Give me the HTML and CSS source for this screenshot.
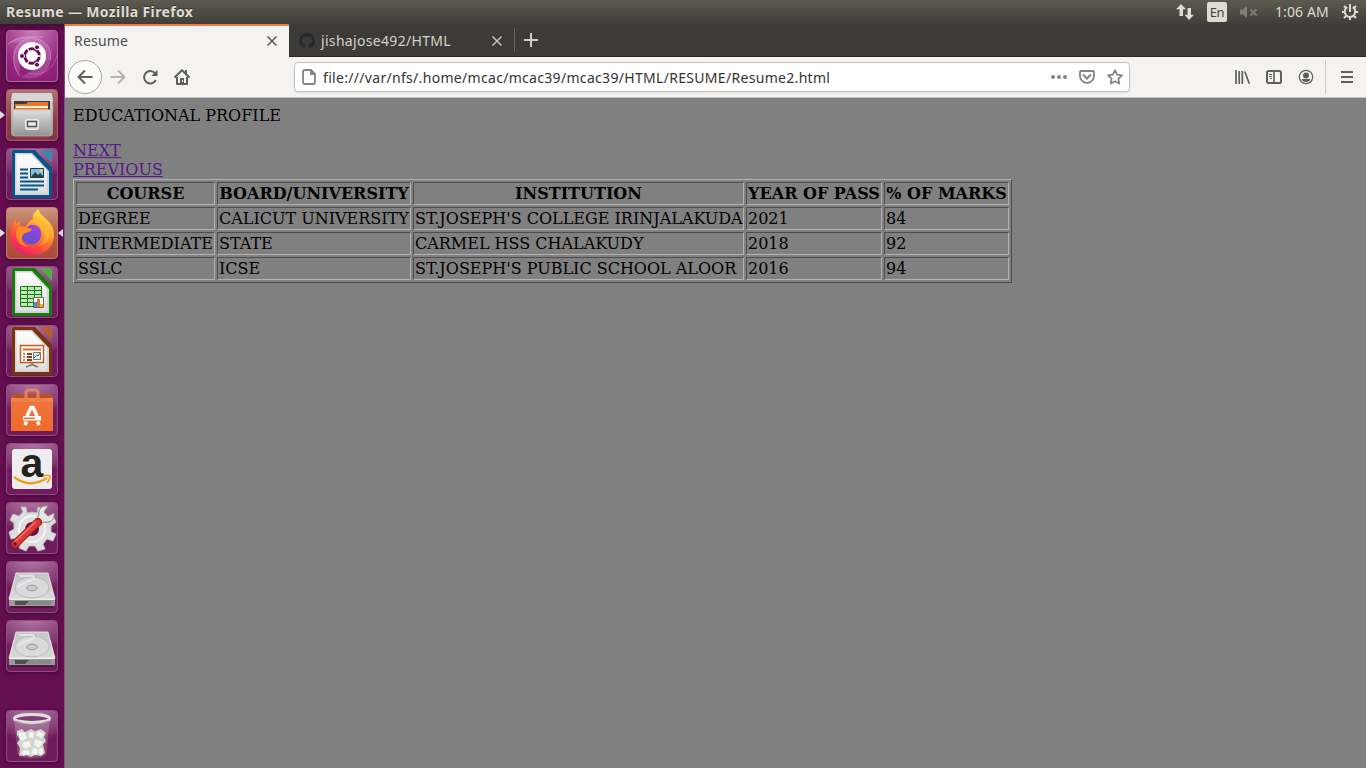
FILE: index.html
```html
<!DOCTYPE html>
<html lang="en">
<head>
<meta charset="utf-8">
<title>Resume</title>
<link rel="stylesheet" href="styles.css">
</head>
<body>
<svg class="defs" width="0" height="0">
  <defs>
    <linearGradient id="silver" x2="0" y2="1"><stop stop-color="#dedede"/><stop offset="1" stop-color="#929292"/></linearGradient>
    <linearGradient id="paper" x2="0" y2="1"><stop stop-color="#ffffff"/><stop offset="1" stop-color="#dfdfdf"/></linearGradient>
    <linearGradient id="flame" x1=".8" y1="0" x2=".25" y2="1"><stop stop-color="#fff04f"/><stop offset=".4" stop-color="#ff9d2d"/><stop offset=".7" stop-color="#ff5038"/><stop offset="1" stop-color="#ee1278"/></linearGradient>
    <linearGradient id="globe" x1=".7" y1="0" x2=".3" y2="1"><stop stop-color="#a63de0"/><stop offset="1" stop-color="#5356c8"/></linearGradient>
    <linearGradient id="bag" x2="0" y2="1"><stop stop-color="#ea7645"/><stop offset="1" stop-color="#f26b27"/></linearGradient>
    <linearGradient id="disktop" x2="0" y2="1"><stop stop-color="#c4c4c4"/><stop offset="1" stop-color="#dadada"/></linearGradient>
    <symbol id="disk" viewBox="0 0 52 52">
      <path d="M5 44h42v3H5z" fill="#330a2c" opacity=".5"/>
      <path d="M10 12 42 12 49 38 3 38z" fill="url(#disktop)" stroke="#f1f1f1" stroke-width=".8"/>
      <ellipse cx="26" cy="26.500" rx="17" ry="10.500" fill="#dadada" stroke="#bababa"/>
      <path d="M13 15h14c5 5-10 5-15 11" fill="none" stroke="#eeeeee" stroke-width="1.300"/>
      <ellipse cx="26" cy="27" rx="5.300" ry="2.800" fill="#cacaca" stroke="#999"/>
      <path d="M3 38h46v6q0 1-1 1H4q-1 0-1-1z" fill="#9b9b9b"/>
      <path d="M9 40h36v4H9z" fill="#505050"/><path d="M23 40h22v4H19z" fill="#898989"/>
      <path d="M3 38.500h46" stroke="#eee"/>
    </symbol>
  </defs>
</svg>

<header class="panel">
  <div class="panel-title">Resume — Mozilla Firefox</div>
  <div class="indicators">
    <svg class="ind-net" width="18" height="18" viewBox="0 0 18 18" fill="#dfdbd2"><path d="M5 1 10 6.300H7V13H3.500V6.300H0z"/><path d="M13 17 8.500 11.700h3V5H15v6.700h3z"/></svg>
    <span class="lang">En</span>
    <svg class="ind-vol" width="18" height="14" viewBox="0 0 18 14"><path d="M0 4.500h3L7 1v12L3 9.500H0z" fill="#827f77"/><path d="m10.500 4.500 6 6m0-6-6 6" stroke="#827f77" stroke-width="1.800"/></svg>
    <span class="clock">1:06 AM</span>
    <svg class="ind-gear" width="18" height="18" viewBox="0 0 18 18" fill="none" stroke="#dfdbd2"><path d="M6.200 4.200a5.300 5.300 0 1 0 5.600 0" stroke-width="2"/><path d="M9 1v8" stroke-width="2"/><path d="m3 3 2 2m10-2-2 2M1 9h3m10 0h3M3 15l2-2m10 2-2-2m-4 1v3" stroke-width="2"/></svg>
  </div>
</header>

<div class="desktop">
  <nav class="launcher">
    <div class="tile dash"><svg viewBox="0 0 52 52"><g fill="none" stroke="#e8b3db" opacity=".5"><path d="M2 14C24-2 49 12 44 30"/><path d="M14 46C0 29 10 3 37 7"/><path d="M22 43c17 4 26-6 29-18" opacity=".6"/></g><path d="M2 13C24-2 48 12 44 29L31 11zM44 20c5 20-11 33-29 27l20-11zM13 45C1 28 9 6 28 7L15 24z" fill="#eec2e4" opacity=".2"/><circle cx="26" cy="26" r="14" fill="#fff"/><circle cx="26" cy="26" r="7.300" fill="none" stroke="#64104f" stroke-width="3"/><g stroke="#fff" stroke-width="1.300"><path d="m26 26 11 0M26 26l-6-10m6 10-6 10"/></g><circle cx="26" cy="26" r="5.700" fill="#fff"/><g fill="#64104f" stroke="#fff" stroke-width="1"><circle cx="16" cy="26" r="2.500"/><circle cx="31" cy="17.300" r="2.500"/><circle cx="31" cy="34.700" r="2.500"/></g></svg></div>
    <div class="tile files"><svg viewBox="0 0 52 52"><path d="M6 6q0-2 2-2h36q2 0 2 2l1 11v27q0 3-3 3H8q-3 0-3-3V17z" fill="url(#silver)"/><path d="M6 6q0-2 2-2h36q2 0 2 2l1 6H5z" fill="#d6d6d6"/><path d="M8 12h36v10H8z" fill="#453b37"/><path d="M9 15h11l2-2h20v8H9z" fill="#e8782c"/><path d="M10 17h32v2H10z" fill="#fff3df"/><path d="M8 20h35v2H8z" fill="#f4ae65"/><path d="M7 21h38v24q0 2-2 2H9q-2 0-2-2z" fill="url(#silver)" stroke="#b9b9b9" stroke-width=".7"/><rect x="19.500" y="30.500" width="13" height="10" rx="1.500" fill="#ddd" stroke="#eee"/><path d="M21.500 32.500h9v5h-9z" fill="#eee" stroke="#555" stroke-width="1.400"/></svg><i class="pip left"></i></div>
    <div class="tile"><svg viewBox="0 0 52 52"><path d="M9 2h20l17 18v28q0 2-2 2H8q-2 0-2-2V5q0-3 3-3z" fill="#07568a"/><path d="M34 2h9q3 0 3 3v10z" fill="#3d86ac"/><path d="M9 5h17l17 18v24H9z" fill="#d3d3d3"/><path d="M10.500 6.500H25L41 23v22H10.500z" fill="url(#paper)"/><path d="M14 21.500h8m-8 4h8m-8 4h8m-8 4h24m-24 4h24m-24 4h18" stroke="#07568a" stroke-width="1.800"/><path d="M24.500 20.500h13v9h-13z" fill="#82bee6" stroke="#12405b"/><path d="m25 29 4-5 3 3 2-2 4 4z" fill="#303e33"/><circle cx="35" cy="22.500" r="1.500" fill="#f4d143"/></svg></div>
    <div class="tile firefox"><svg viewBox="0 0 52 52"><path d="M33 2c0 4 2 5 5 8 6 5 10 10 10 18 0 12-9 20-22 20C13 48 4 40 4 28c0-6 2-11 6-16v5c1-1 2-2 4-3-1 5 1 6 5 7 3-6 6-8 8-9-1-4 2-8 6-10z" fill="url(#flame)"/><path d="M17 21c3 0 5-1 7-3 8-1 12 4 11 11-1 6-6 9-11 8-7-1-10-7-7-11 2-2 6-2 8-3-3 0-5 0-8-2z" fill="url(#globe)"/><path d="M28 12c0 5 8 6 10 13 2 5-1 12-6 14 11-2 15-12 10-20l-4-5z" fill="#ffb632" opacity=".7"/><path d="M11 21c5-4 9 0 15 1-2 4-7 3-9 6-3 4 0 10 6 12-10-1-15-8-12-19z" fill="#ff8b29"/></svg><i class="pip left"></i><i class="pip right"></i></div>
    <div class="tile"><svg viewBox="0 0 52 52"><path d="M9 2h20l17 18v28q0 2-2 2H8q-2 0-2-2V5q0-3 3-3z" fill="#187c12"/><path d="M34 2h9q3 0 3 3v10z" fill="#50ac43"/><path d="M9 5h17l17 18v24H9z" fill="#d3d3d3"/><path d="M10.500 6.500H25L41 23v22H10.500z" fill="url(#paper)"/><path d="M14.500 20.500h21v20h-21z" fill="#bce8b5" stroke="#187c12"/><path d="M14.500 24.500h21m-21 4h21m-21 4h21m-21 4h21m-14-16v20m7-20v20" stroke="#187c12"/><path d="M27.500 31.500h10v10h-10z" fill="#fff" stroke="#666"/><path d="M28 36h3v5h-3z" fill="#259be1"/><path d="M31 33h3v8h-3z" fill="#e66d26"/><path d="M34 38h3v3h-3z" fill="#edbc14"/></svg></div>
    <div class="tile"><svg viewBox="0 0 52 52"><path d="M9 2h20l17 18v28q0 2-2 2H8q-2 0-2-2V5q0-3 3-3z" fill="#79340f"/><path d="M34 2h9q3 0 3 3v10z" fill="#b65d29"/><path d="M9 5h17l17 18v24H9z" fill="#d3d3d3"/><path d="M10.500 6.500H25L41 23v22H10.500z" fill="url(#paper)"/><path d="M14.500 20.500h23v17h-23z" fill="#fff" stroke="#c75b1c" stroke-width="1.400"/><path d="M17 24.500h18" stroke="#d86823" stroke-width="2"/><path d="M17 29h2m-2 3h2m-2 3h2" stroke="#e68b55" stroke-width="2"/><path d="M21 29h5m-5 3h5m-5 3h5" stroke="#893e18" stroke-width="2"/><path d="M27.500 27.500h7v7h-7z" fill="#eee" stroke="#777"/><path d="m28 33 3-3 1 1 2-3" fill="none" stroke="#27962c"/><path d="M26 38v2m-6 2 5-2h2l5 2" fill="none" stroke="#777" stroke-width="1.500"/></svg></div>
    <div class="tile"><svg viewBox="0 0 52 52"><path d="M8 10h36l3 4v33H5V14z" fill="url(#bag)"/><path d="M8 10h36l3 4H5z" fill="#b9522a"/><path d="M5 14h42v4H5z" fill="#ee814f"/><path d="M20 17V9q0-3 3-3h6q3 0 3 3v8" fill="none" stroke="#e28157" stroke-width="3"/><path d="m21 32 4-8.500h2l4 8.500" fill="none" stroke="#fff" stroke-width="3.500"/><path d="M17 32h18v4.500H17z" fill="#fff"/><path d="m20.500 37.500-1.500 3.500m12.500-3.500 1.500 3.500" stroke="#fff" stroke-width="3.500"/><path d="M18 34.300h11" stroke="#ee7440" stroke-width="1.500"/></svg></div>
    <div class="tile amazon"><svg viewBox="0 0 52 52"><rect x="6" y="6" width="40" height="40" rx="3" fill="#eee"/><text x="26" y="33.500" text-anchor="middle">a</text><path d="M8 34q16 12 33 1" fill="none" stroke="#f39b16" stroke-width="2.300"/><path d="M37 33.500q4-2 7-.5 0 4-3 7" fill="none" stroke="#f39b16" stroke-width="1.500"/></svg></div>
    <div class="tile"><svg viewBox="0 0 52 52"><path d="m20 5 1 6 5-1 5 1 1-6 6 2-1 6 5 4 5-3 3 6-5 4v6l5 2-3 7-6-2-4 5 2 5-7 2-3-5h-6l-3 5-7-3 2-5-4-5-6 1-2-7 5-3v-6l-4-3 3-6 6 2 4-4-2-5z" fill="#dedede" stroke="#bcbcbc"/><circle cx="26" cy="27" r="13" fill="none" stroke="#f5f5f5" stroke-width="2"/><circle cx="26" cy="27" r="7" fill="#650f50"/><path d="m29 18 4-5C32 7 36 3 42 4l-4 6 4 4 6-3c1 7-4 10-10 9l-5 4z" fill="#e6e6e6" stroke="#888"/><path d="m9 42 23-22" stroke="#a91e1f" stroke-width="8" stroke-linecap="round"/><path d="m9 42 22.500-21.500" stroke="#d83a34" stroke-width="6" stroke-linecap="round"/><path d="m9 39.500 21-20" stroke="#f0776a" stroke-width="1.500"/><circle cx="9" cy="42" r="1.700" fill="#5b1018"/></svg></div>
    <div class="tile"><svg viewBox="0 0 52 52"><use href="#disk"/></svg></div>
    <div class="tile"><svg viewBox="0 0 52 52"><use href="#disk"/></svg></div>
    <div class="tile trash"><svg viewBox="0 0 52 52"><path d="m9 11 3 32q1 5 14 5t14-5l3-32" fill="#fff" opacity=".18" stroke="#fff"/><path d="m11 21 5-2 3 3 6-3 4 2 6-2 5 4-2 4 2 4-3 4 2 8-4 3-6-1-4 2-5-2-7 1 1-8-3-5 3-4-3-4z" fill="#d4d4cf"/><path d="m13 22 6 1 2 5-5 3-3-3zm10 0 5 1-1 6-4-2zm9-1 6 3-3 4-5-3zm-3 8 8 3-4 6-5-3zm-12 3 6-1 2 5-5 3-4-3zm-1 9 6-1 2 4-7 2zm11-3 5 1-1 6-6-1zm7 0 3 1-1 6-4-2z" fill="#f3f3f0"/><ellipse cx="26" cy="8.500" rx="17.500" ry="4" fill="#833a72" stroke="#dededb" stroke-width="3"/><path d="M9 11q17 7 34 0" fill="none" stroke="#92908f"/></svg></div>
  </nav>

  <main class="window">
    <div class="tabs">
      <div class="tab active"><span class="tab-one">Resume</span><svg width="12" height="12" viewBox="0 0 12 12"><path d="m1.500 1.500 9 9m0-9-9 9" stroke="#555" stroke-width="1.500"/></svg></div>
      <div class="tab"><svg class="github" width="16" height="16" viewBox="0 0 16 16"><path fill="#24292e" d="M8 0a8 8 0 0 0-2.530 15.590c.4.070.55-.17.550-.38v-1.490c-2.230.48-2.700-.95-2.700-.95-.36-.93-.89-1.180-.89-1.180-.73-.5.050-.49.050-.49.810.060 1.230.83 1.230.83.720 1.230 1.880.88 2.340.67.070-.52.280-.88.510-1.080-1.780-.2-3.640-.89-3.640-3.950 0-.87.310-1.590.820-2.150-.08-.2-.36-1.020.08-2.120 0 0 .67-.21 2.200.82a7.600 7.600 0 0 1 4 0c1.530-1.030 2.200-.82 2.200-.82.440 1.100.16 1.920.08 2.120.51.560.82 1.270.82 2.150 0 3.070-1.870 3.750-3.650 3.950.29.250.54.730.54 1.480v2.200c0 .21.150.46.550.38A8 8 0 0 0 8 0"/></svg><span class="tab-two">jishajose492/HTML</span><svg width="12" height="12" viewBox="0 0 12 12"><path d="m1.500 1.500 9 9m0-9-9 9" stroke="#c8c5be" stroke-width="1.500"/></svg></div>
      <span class="tab-divider"></span>
      <svg class="plus" width="14" height="14" viewBox="0 0 14 14"><path d="M7 0v14M0 7h14" stroke="#d1cec7" stroke-width="2"/></svg>
    </div>
    <div class="toolbar">
      <div class="back"><svg width="16" height="16" viewBox="0 0 16 16"><path d="M15.500 8H1m7-6.500L1.500 8 8 14.500" fill="none" stroke="#5f5f5d" stroke-width="2"/></svg></div>
      <svg class="forward" width="16" height="16" viewBox="0 0 16 16"><path d="M.5 8H15M8 1.500 14.500 8 8 14.500" fill="none" stroke="#b5b4b2" stroke-width="2"/></svg>
      <svg class="reload" width="16" height="16" viewBox="0 0 16 16"><path d="M13 4.200A6.200 6.200 0 1 0 13.800 11" fill="none" stroke="#5f5f5d" stroke-width="2"/><path d="M15.500.8V7H9.300z" fill="#5f5f5d"/></svg>
      <svg class="home" width="16" height="16" viewBox="0 0 16 16"><path d="m.5 8.500 7.500-7.300 7.500 7.300M3 8v7h10V8" fill="none" stroke="#5f5f5d" stroke-width="2" stroke-linejoin="round"/><path d="M6 9h4v6H6zM11 1h2v4h-2z" fill="#5f5f5d"/><path d="M8 11h1v2H8z" fill="#fff"/></svg>
      <div class="urlbar">
        <svg class="page-icon" width="14" height="16" viewBox="0 0 14 16"><path d="M3 1h6l4 4v8q0 2-2 2H3q-2 0-2-2V3q0-2 2-2m6 0v4h4" fill="none" stroke="#838381" stroke-width="1.800"/></svg>
        <span class="url">file:///var/nfs/.home/mcac/mcac39/mcac39/HTML/RESUME/Resume2.html</span>
        <svg class="dots" width="16" height="16" viewBox="0 0 16 16" fill="#848484"><circle cx="2" cy="8" r="2"/><circle cx="8" cy="8" r="2"/><circle cx="14" cy="8" r="2"/></svg>
        <svg width="16" height="16" viewBox="0 0 16 16" fill="none" stroke="#848484"><path d="M2 2h12q1 0 1 1v4a7 7 0 0 1-14 0V3q0-1 1-1z" stroke-width="1.800"/><path d="m4.500 6 3.500 3.500L11.500 6" stroke-width="2" stroke-linecap="round"/></svg>
        <svg width="16" height="16" viewBox="0 0 16 16"><path d="m8 1.200 2.100 4.500 4.900.600-3.600 3.400.900 4.900L8 12.200l-4.300 2.400.9-4.900L1 6.300l4.900-.6z" fill="none" stroke="#848484" stroke-width="1.700" stroke-linejoin="round"/></svg>
      </div>
      <div class="tools">
        <svg width="16" height="16" viewBox="0 0 16 16" stroke="#5f5f5d" stroke-width="2"><path d="M2 1v14M5.200 2v13M8.300 2v13M10.800 2.500l4.500 12.300" fill="none" stroke-width="1.700"/></svg>
        <svg width="16" height="16" viewBox="0 0 16 16" fill="none" stroke="#5f5f5d"><rect x="1" y="2" width="14" height="12" rx="1.800" stroke-width="2"/><path d="M8 2v12" stroke-width="1.600"/><path d="M3 5.500h3m-3 2h3m-2 2h2"/></svg>
        <svg width="16" height="16" viewBox="0 0 16 16"><circle cx="8" cy="8" r="6.700" fill="none" stroke="#5f5f5d" stroke-width="1.200"/><circle cx="8" cy="6.500" r="3" fill="#5f5f5d"/><path d="M3.500 10h9q-1 3-4.500 3t-4.500-3z" fill="#5f5f5d"/></svg>
        <span class="tool-divider"></span>
        <svg class="menu" width="12" height="12" viewBox="0 0 12 12"><path d="M0 1h12M0 6h12M0 11h12" stroke="#5f5f5d" stroke-width="2"/></svg>
      </div>
    </div>
    <section class="page">
      <p>EDUCATIONAL PROFILE</p>
      <a href="#">NEXT</a><br>
      <a href="#">PREVIOUS</a>
      <table>
        <colgroup><col class="c1"><col class="c2"><col class="c3"><col class="c4"><col class="c5"></colgroup>
        <tr><th>COURSE</th><th>BOARD/UNIVERSITY</th><th>INSTITUTION</th><th>YEAR OF PASS</th><th>% OF MARKS</th></tr>
        <tr><td>DEGREE</td><td>CALICUT UNIVERSITY</td><td>ST.JOSEPH'S COLLEGE IRINJALAKUDA</td><td>2021</td><td>84</td></tr>
        <tr><td>INTERMEDIATE</td><td>STATE</td><td>CARMEL HSS CHALAKUDY</td><td>2018</td><td>92</td></tr>
        <tr><td>SSLC</td><td>ICSE</td><td>ST.JOSEPH'S PUBLIC SCHOOL ALOOR</td><td>2016</td><td>94</td></tr>
      </table>
    </section>
  </main>
</div>
</body>
</html>
```
FILE: styles.css
```css
* { box-sizing: border-box; }
body { margin: 0; width: 1366px; height: 768px; overflow: hidden; font: 14px/20px "Noto Sans", sans-serif; }
svg { display: block; flex: none; }
.defs { position: absolute; }

.panel { height: 24px; display: flex; align-items: center; justify-content: space-between; background: linear-gradient(#5d5a50, #3f3e39); color: #dfdbd2; padding: 0 7px 0 6px; }
.panel-title { font-weight: 700; font-size: 14px; letter-spacing: .37px; white-space: nowrap; text-shadow: 0 -1px #34332f; }
.indicators { display: flex; align-items: center; }
.ind-net { margin-right: 13px; }
.lang { width: 20px; height: 20px; border-radius: 2px; background: #dfdbd2; color: #45433d; text-align: center; font-size: 13px; margin-right: 13px; letter-spacing: -.5px; }
.ind-vol { margin-right: 17px; }
.clock { width: 54px; margin-right: 12px; white-space: nowrap; letter-spacing: .1px; }

.desktop { display: flex; height: 744px; }
.launcher { width: 65px; flex: none; display: flex; flex-direction: column; gap: 7px; padding: 6px 0 6px 6px; border-right: 1px solid #815078; background: linear-gradient(#460b39, #640e51 8px, #650f50); }
.tile { position: relative; width: 52px; height: 52px; flex: none; border-radius: 4px; border: 1px solid #914c82; background: radial-gradient(ellipse 95% 75% at 50% -15%, #b883ad, #82366f 85%, transparent 100%), #6f1b5c; box-shadow: 0 1px 4px #3e0832; }
.tile svg { width: 52px; height: 52px; margin: -1px; overflow: visible; }
.tile.dash { background: radial-gradient(circle at 50% 0, #c77fb9, #96257f 65%, #8c1c73); border-color: #b665a7; }
.tile.files { background: linear-gradient(#b17573, #8f3846 60%, #883542); border-color: #a85d69; }
.tile.firefox { background: linear-gradient(#cb9880, #b75c43 50%, #ac4b3c); border-color: #c37b6d; }
.trash { margin-top: auto; }
.pip { position: absolute; top: 21px; border: 4px solid transparent; }
.pip.left { left: -7px; border-left: 5px solid #ddd; border-right: 0; }
.pip.right { right: -6px; border-right: 5px solid #ddd; border-left: 0; }
.amazon text { font: 700 41px "Liberation Sans", sans-serif; fill: #222; }

.window { flex: 1; min-width: 0; display: flex; flex-direction: column; }
.tabs { height: 33px; background: #3c3b37; border-bottom: 1px solid #292825; display: flex; align-items: center; }
.tab { width: 225px; height: 32px; display: flex; align-items: center; justify-content: space-between; padding: 2px 11px 0 10px; color: #d4d1ca; white-space: nowrap; }
.tab.active { width: 224px; height: 33px; margin-bottom: -1px; background: #f4f3f2; color: #4c4c4c; border-top: 2px solid #f07746; padding: 0 11px 1px 9px; }
.tab-one { letter-spacing: .2px; }
.tab-two { width: 131px; margin-right: 39px; margin-left: 6px; letter-spacing: .32px; }
.tab-divider { width: 1px; height: 24px; background: #66645e; }
.plus { margin-left: 9px; }
.toolbar { height: 41px; background: #f4f3f2; border-bottom: 1px solid #c3c1be; display: flex; align-items: center; padding-left: 3px; }
.back { width: 34px; height: 34px; border: 1px solid #aaa8a5; border-radius: 50%; background: #fbfbfa; display: flex; align-items: center; justify-content: center; }
.forward { margin-left: 8px; }
.reload { margin-left: 16px; }
.home { margin-left: 16px; }
.urlbar { margin-left: 104px; width: 836px; height: 30px; border: 1px solid #c5c2be; border-radius: 4px; background: #fff; display: flex; align-items: center; padding: 0 6px 0 7px; box-shadow: 0 1px 2px #0001; }
.url { margin-left: 7px; width: 710px; color: #333; white-space: nowrap; letter-spacing: .31px; padding-top: 1px; }
.urlbar .dots { margin-left: auto; margin-right: 12px; }
.urlbar .dots + svg { margin-right: 12px; }
.tools { margin-left: auto; display: flex; align-items: center; gap: 16px; padding-right: 13px; }
.tool-divider { width: 1px; height: 34px; margin-left: -5px; margin-right: -1px; background: #cbc9c6; }

.page { flex: 1; background: #808080; color: #000; padding: 8px; font: 16px/19px "DejaVu Serif", serif; }
.page p { margin: 0 0 16px; }
.page a { color: #551a8b; }
.page table { table-layout: fixed; width: 939px; border: 1px solid; border-color: #b3b3b3 #4d4d4d #4d4d4d #b3b3b3; border-spacing: 2px; }
.page th, .page td { height: 23px; padding: 1px; border: 1px solid; border-color: #4d4d4d #b3b3b3 #b3b3b3 #4d4d4d; white-space: nowrap; }
.c1 { width: 139px; }
.c2 { width: 194px; }
.c3 { width: 331px; }
.c4 { width: 136px; }
.c5 { width: 125px; }
```
